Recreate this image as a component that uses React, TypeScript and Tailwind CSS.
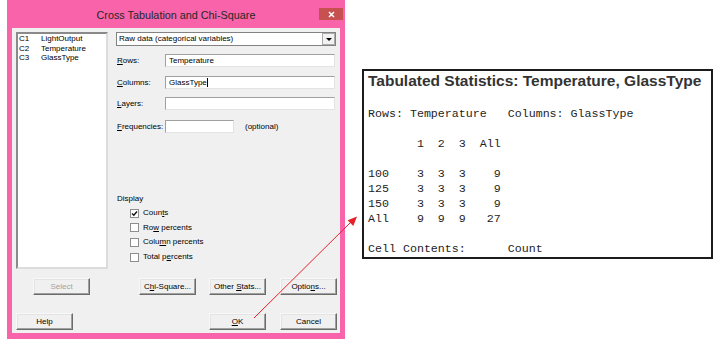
import type { ReactNode } from "react";

const sans = "font-['Liberation_Sans',Arial,sans-serif]";

function Btn({
  children,
  className = "",
  disabled = false,
}: {
  children: ReactNode;
  className?: string;
  disabled?: boolean;
}) {
  return (
    <div
      className={`h-[17px] w-[57px] flex items-center justify-center bg-[#f0f0f0] border border-t-[#f8f8f8] border-l-[#f8f8f8] border-r-[#6b6b6b] border-b-[#6b6b6b] shadow-[inset_-1px_-1px_0_#a0a0a0,inset_1px_1px_0_#e3e3e3] ${
        disabled ? "text-[#a3a3a3]" : "text-black"
      } ${className}`}
    >
      <span className="whitespace-pre">{children}</span>
    </div>
  );
}

function Input({ value, caret = false, className = "" }: { value?: string; caret?: boolean; className?: string }) {
  return (
    <div
      className={`h-[13px] bg-white border border-t-[#a0a0a0] border-l-[#a0a0a0] border-r-[#e3e3e3] border-b-[#e3e3e3] flex items-center pl-[3px] ${className}`}
    >
      {value}
      {caret && <span className="w-px h-[9px] bg-black" />}
    </div>
  );
}

function Field({ label, value, caret }: { label: ReactNode; value?: string; caret?: boolean }) {
  return (
    <div className="flex items-center">
      <div className="w-[49px] pl-[1px]">{label}</div>
      <Input value={value} caret={caret} className="w-[170px]" />
    </div>
  );
}

function Check({ checked = false, children }: { checked?: boolean; children: ReactNode }) {
  return (
    <div className="flex items-center h-[10px] pl-[14px]">
      <div className="w-[9px] h-[9px] bg-white border border-[#8e8e8e] flex items-center justify-center">
        {checked && (
          <svg width="7" height="7" viewBox="0 0 7 7">
            <path d="M1 3.5 L2.8 5.3 L6 1.5" stroke="#111" strokeWidth="1.4" fill="none" />
          </svg>
        )}
      </div>
      <span className="ml-[4px] whitespace-pre">{children}</span>
    </div>
  );
}

const columns = [
  ["C1", "LightOutput"],
  ["C2", "Temperature"],
  ["C3", "GlassType"],
];

const output = [
  "Rows: Temperature   Columns: GlassType",
  "",
  "       1  2  3  All",
  "",
  "100    3  3  3    9",
  "125    3  3  3    9",
  "150    3  3  3    9",
  "All    9  9  9   27",
  "",
  "Cell Contents:      Count",
].join("\n");

export default function App() {
  return (
    <div className={`relative w-[718px] h-[346px] bg-white overflow-hidden flex ${sans}`}>
      {/* dialog window */}
      <div className="ml-[7px] w-[338px] h-[339px] bg-[#f963a9] flex flex-col">
        <div className="h-[28px] grid grid-cols-[26px_1fr_26px]">
          <div />
          <div className="pt-[9px] text-center text-[10.8px] leading-[13px] text-[#262626]">
            Cross Tabulation and Chi-Square
          </div>
          <div className="pt-[8px]">
            <div className="w-[24px] h-[12px] bg-[#c75050] flex items-center justify-center">
              <svg width="7" height="7" viewBox="0 0 7 7">
                <path d="M1 1 L6 6 M6 1 L1 6" stroke="#fff" strokeWidth="1.5" />
              </svg>
            </div>
          </div>
        </div>

        <div className="mx-[5px] h-[305px] bg-[#f0f0f0] flex flex-col pl-[4px] pt-[4px] text-[8px] leading-[10px] text-black">
          <div className="flex">
            <div className="w-[92px] h-[237px] bg-white border-2 border-t-[#8a8a8a] border-l-[#8a8a8a] border-r-[#dcdcdc] border-b-[#dcdcdc] pl-[1px]">
              {columns.map(([c, n]) => (
                <div key={c} className="flex leading-[9.5px]">
                  <span className="w-[22px]">{c}</span>
                  <span>{n}</span>
                </div>
              ))}
            </div>

            <div className="ml-[8px] w-[221px] flex flex-col">
              <div className="w-[220px] h-[14px] bg-white border border-[#828282] flex items-center pl-[2px]">
                <span>Raw data (categorical variables)</span>
                <div className="ml-auto w-[13px] h-[12px] bg-[#f2f2f2] border border-[#ababab] flex items-center justify-center">
                  <div className="w-0 h-0 border-x-[3px] border-x-transparent border-t-[3px] border-t-black" />
                </div>
              </div>

              <div className="mt-[8px]">
                <Field label={<><u>R</u>ows:</>} value="Temperature" />
              </div>
              <div className="mt-[9px]">
                <Field label={<><u>C</u>olumns:</>} value="GlassType" caret />
              </div>
              <div className="mt-[8px]">
                <Field label={<><u>L</u>ayers:</>} />
              </div>
              <div className="mt-[10px] flex items-center">
                <div className="w-[49px] pl-[1px]">
                  <u>F</u>requencies:
                </div>
                <Input className="w-[69px]" />
                <span className="ml-[11px]">(optional)</span>
              </div>

              <div className="mt-[61px] pl-[1px]">Display</div>
              <div className="mt-[4px] flex flex-col gap-[4.7px]">
                <Check checked>
                  Coun<u>t</u>s
                </Check>
                <Check>
                  Ro<u>w</u> percents
                </Check>
                <Check>
                  Colu<u>m</u>n percents
                </Check>
                <Check>
                  Total p<u>e</u>rcents
                </Check>
              </div>
            </div>
          </div>

          <div className="mt-[9px] flex">
            <Btn disabled className="ml-[17px]">
              Select
            </Btn>
            <Btn className="ml-[49px]">
              C<u>h</u>i-Square...
            </Btn>
            <Btn className="ml-[13px]">
              Other <u>S</u>tats...
            </Btn>
            <Btn className="ml-[14px]">
              Optio<u>n</u>s...
            </Btn>
          </div>
          <div className="mt-[18px] flex">
            <Btn>Help</Btn>
            <Btn className="ml-[136px]">
              <u>O</u>K
            </Btn>
            <Btn className="ml-[14px]">Cancel</Btn>
          </div>
        </div>
      </div>

      {/* session output */}
      <div className="ml-[17px] mt-[69px] w-[351px] h-[190px] border-2 border-[#1c1c1c] pl-[4px] pt-[1px]">
        <div className="text-[15.5px] leading-[18px] font-bold text-[#333]">
          Tabulated Statistics: Temperature, GlassType
        </div>
        <pre className="mt-[15.5px] font-['Liberation_Mono','Courier_New',monospace] text-[11.65px] leading-[15px] text-[#1e1e1e]">
          {output}
        </pre>
      </div>

      {/* red pointer arrow */}
      <svg className="absolute inset-0 pointer-events-none" width="718" height="346" viewBox="0 0 718 346">
        <line x1="254" y1="318" x2="351" y2="222" stroke="#e8202a" strokeWidth="1" />
        <polygon points="357,216.5 353.3,226 347.6,220.3" fill="#e8202a" />
      </svg>
    </div>
  );
}
